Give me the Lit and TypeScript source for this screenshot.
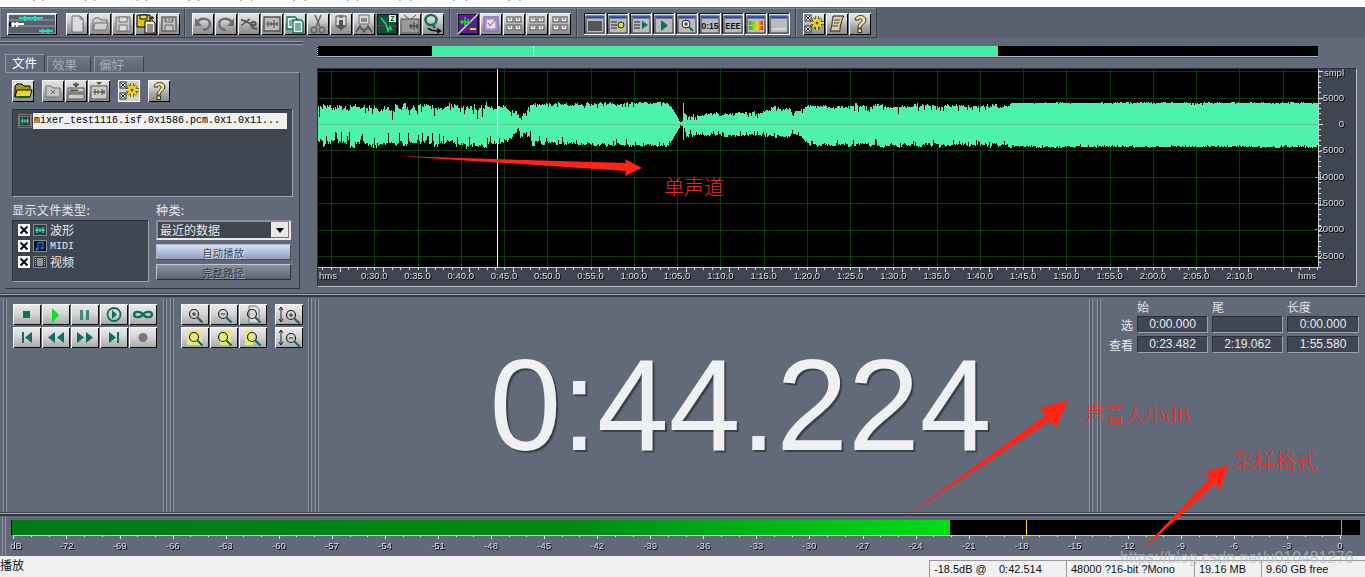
import { LitElement, html, css, svg } from "lit";
import { customElement } from "lit/decorators.js";

const G = "#6c6f74", T = "#0e6f5f";
const ico: Record<string, any> = {
  logo: svg`<rect x="2" y="2" width="46" height="18" fill="#59606c"/><path d="M2 7H48M2 13H48" stroke="#8fa0b8"/><path d="M12 5h24M18 3v5M22 4v3M28 3v5M32 4v3" stroke="#19e0c0" stroke-width="2"/><path d="M3 11h14M6 9v5M10 9v5" stroke="#fff" stroke-width="2"/><rect x="2" y="9.500" width="2" height="4" fill="#000"/><path d="M32 18h14M36 16v4M41 16v4" stroke="#19e0c0" stroke-width="2"/>`,
  new: svg`<path d="M6 3h8l3 3v13H6z" fill="#dcdcdc" stroke="${G}"/><path d="M14 3v3h3" fill="none" stroke="${G}"/>`,
  open: svg`<path d="M4 17V7l2-2h4l2 2h6v3" fill="none" stroke="${G}"/><path d="M4 17l2-7h13l-2 7z" fill="#d0d0d0" stroke="${G}"/>`,
  save: svg`<path d="M4 4h14v14H4z" fill="#c8c8c8" stroke="${G}"/><path d="M7 4h8v5H7zM7 12h8v6H7z" fill="#ddd" stroke="${G}"/>`,
  saveall: svg`<path d="M2 2h13v12H2z" fill="#d9c51e" stroke="#000"/><path d="M5 2h7v4H5z" fill="#f0e050" stroke="#000"/><path d="M10 8h8l2 2v10H10z" fill="#eee" stroke="#000"/><path d="M12 12h6M12 14h6M12 16h6M12 18h6" stroke="#333"/><path d="M17 3v4M15 5h4" stroke="#000"/>`,
  saveg: svg`<path d="M4 4h14v14H4z" fill="#c4c4c4" stroke="#666" stroke-width="1.500"/><path d="M7 4v5h8V4M8 5v3M11 5v3M14 5v3M7 18v-6h8v6" fill="none" stroke="#666"/>`,
  undo: svg`<path d="M5 9c4-5 13-4 13 2 0 4-4 6-7 6" fill="none" stroke="${G}" stroke-width="2.500"/><path d="M3 5v8h7z" fill="${G}"/>`,
  redo: svg`<path d="M17 9c-4-5-13-4-13 2 0 4 4 6 7 6" fill="none" stroke="${G}" stroke-width="2.500"/><path d="M19 5v8h-7z" fill="${G}"/>`,
  mix: svg`<path d="M3 7c5 0 8 4 12 5 3 .8 4-2 1-3-4-1-5 6 3 7" fill="none" stroke="#555" stroke-width="2"/><path d="M3 12c3 0 5-4 9-6" fill="none" stroke="#555" stroke-width="1.500"/>`,
  wbox: svg`<rect x="3" y="4" width="16" height="14" fill="#bbb" stroke="#555" stroke-width="1.500"/><path d="M5 11h12M7 8v6M10 9v4M13 7v8M16 9v4" stroke="#444"/>`,
  copy: svg`<path d="M3 4h8l2 2v10H3z" fill="#e8f4ee" stroke="#0a6b50" stroke-width="1.300"/><path d="M9 7h8l2 2v11H9z" fill="#e8f4ee" stroke="#0a6b50" stroke-width="1.300"/><path d="M5 8h5M5 10h3M5 12h3M11 11h6M11 13h6M11 15h6M11 17h6" stroke="#0a6b50"/>`,
  cut: svg`<path d="M8 2l5 12M14 2l-5 12" stroke="#666" stroke-width="1.500"/><circle cx="7" cy="17" r="2.800" fill="none" stroke="#666" stroke-width="1.500"/><circle cx="15" cy="17" r="2.800" fill="none" stroke="#666" stroke-width="1.500"/>`,
  paste: svg`<path d="M6 3h10v11H6z" fill="#ddd" stroke="#555"/><rect x="9" y="2" width="4" height="3" fill="#777"/><path d="M9 7h4v5h3l-5 6-5-6h3z" fill="#555"/>`,
  pastemix: svg`<path d="M6 2h10v9H6z" fill="#ddd" stroke="#666"/><path d="M8 5h6v4H8z" fill="#888"/><path d="M3 19l4-6 4 6 4-6 4 6" fill="none" stroke="#555" stroke-width="1.500"/><path d="M5 16h12" stroke="#555"/>`,
  graph: svg`<rect x="1" y="1" width="20" height="20" fill="#0b4f3e" stroke="#000"/><path d="M1 13h20" stroke="#d02020"/><path d="M5 5l5 6 2 7 2-4 2 3" fill="none" stroke="#20e060" stroke-width="1.500"/><rect x="13" y="2" width="7" height="7" fill="#d8e8e0"/><path d="M15 3.500h3l-3 4h3" fill="none" stroke="#063"/>`,
  tv: svg`<path d="M5 2l5 4M17 2l-5 4" stroke="#555"/><rect x="2" y="6" width="18" height="14" fill="#999" stroke="#555"/><path d="M10 13h9M12 11v5M15 9v8M18 11v5" stroke="#333"/>`,
  q: svg`<ellipse cx="9" cy="7" rx="5.500" ry="5" fill="none" stroke="${T}" stroke-width="2.500"/><path d="M10 11l3 4" stroke="${T}" stroke-width="2.500"/><path d="M6 15c3 3 7 3 10 3" fill="none" stroke="#111" stroke-width="1.500"/><path d="M15 15l5 3-5 3z" fill="#111"/>`,
  diag: svg`<rect x="1" y="1" width="20" height="20" fill="#5b1e90" stroke="#000"/><path d="M1 21L21 1V1" stroke="#ddd" stroke-width="1.500"/><path d="M3 9h11M8 4v9M11 6v6M5 7v4" stroke="#20e020" stroke-width="1.500"/><rect x="13" y="15" width="6" height="2" fill="#f0d020"/>`,
  check: svg`<rect x="4" y="4" width="14" height="14" fill="#c8bcd8" stroke="#8a6cb0" stroke-width="1.500"/><rect x="6" y="6" width="10" height="10" fill="#e4e0ec" stroke="#8a6cb0"/><path d="M8 10l2 3 6-7" fill="none" stroke="#7a5ca0"/>`,
  hash: svg`<path d="M4 4h6v5H4zM12 4h6v5h-6zM4 12h6v5H4zM12 12h6v5h-6z" fill="#eee" stroke="#777" stroke-width="1.500"/><path d="M6 6h2M14 6h2M6 14h2M14 14h2" stroke="#555"/>`,
  gear: svg`<rect x="2" y="2" width="6" height="6" fill="#fff" stroke="#222"/><path d="M3 3l4 4M7 3l-4 4" stroke="#222"/><rect x="2" y="13" width="6" height="6" fill="#fff" stroke="#222"/><path d="M3 14l4 4M7 14l-4 4" stroke="#222"/><path d="M14 3v14M8 10h13M9.500 5.500l9 9M18.500 5.500l-9 9" stroke="#000" stroke-width="3"/><path d="M14 3v14M8 10h13M9.500 5.500l9 9M18.500 5.500l-9 9" stroke="#ecd820" stroke-width="2"/><circle cx="14" cy="10" r="4" fill="#ecd820"/><circle cx="14" cy="10" r="1.500" fill="#555"/>`,
  scroll: svg`<path d="M7 3h11c-2 2-2 5-3 8s-1 5-1 7H4c1-2 2-4 2-7s1-6 1-8z" fill="#e2cb9a" stroke="#222"/><path d="M8 7h6M8 10h5M7 13h5" stroke="#444"/>`,
  help: svg`<path d="M6 7c0-6 11-6 11 0 0 4-5 4-5 8H9c0-5 4-5 4-8 0-2-3-2-3 0z" fill="#f0e890" stroke="#333"/><rect x="9" y="16" width="3.500" height="3.500" fill="#f0e890" stroke="#333"/>`,
  folder: svg`<path d="M3 17V6l2-2h5l2 2h6v3" fill="#a89610" stroke="#000"/><path d="M3 17l2-7h15l-2 7z" fill="#e8d820" stroke="#000"/><path d="M5 17h13" stroke="#063" stroke-width="2"/>`,
  xfolder: svg`<path d="M4 17V6h5l2 2h7v9z" fill="#c4c4c4" stroke="${G}"/><path d="M9 10l4 4M13 10l-4 4" stroke="${G}"/>`,
  closeall: svg`<path d="M11 2v3M8 4h6l-3 3z" fill="#555" stroke="#555"/><rect x="3" y="8" width="16" height="4" fill="#ccc" stroke="#555"/><rect x="3" y="14" width="16" height="5" fill="#ccc" stroke="#555"/><rect x="5" y="9.500" width="8" height="1.500" fill="#555"/>`,
  closewave: svg`<path d="M8 2h6l-3 3z" fill="#555"/><rect x="3" y="6" width="16" height="13" fill="#ccc" stroke="#555"/><path d="M5 12h12M7 9v6M10 10v4M14 9v6M16 10v4" stroke="#444"/>`,
};
const winBody = (inner: any) => svg`<rect x="2" y="3" width="18" height="17" fill="#bbb" stroke="#333"/><rect x="3" y="3.500" width="16" height="2" fill="#2040c0"/>${inner}`;
const wins = [
  winBody(svg`<rect x="4" y="8" width="14" height="10" fill="#555"/>`),
  winBody(svg`<path d="M4 9h6M4 12h6M4 15h6" stroke="#222"/><circle cx="14" cy="12" r="3" fill="#dd2" stroke="#222"/>`),
  winBody(svg`<path d="M4 9h6M4 12h6M4 15h6" stroke="#222"/><path d="M12 8l6 4-6 4z" fill="${T}"/>`),
  winBody(svg`<path d="M8 7l7 5.500-7 5.500z" fill="${T}"/>`),
  winBody(svg`<circle cx="10" cy="11" r="4" fill="#eee" stroke="#222"/><path d="M8 11h4M10 9v4" stroke="#222"/><path d="M13 14l4 4" stroke="${T}" stroke-width="2"/>`),
  winBody(svg`<text x="11" y="16" text-anchor="middle" font-size="8.500" font-weight="700" font-family="Liberation Sans" fill="#111">0:15</text>`),
  winBody(svg`<text x="11" y="16" text-anchor="middle" font-size="8.500" font-weight="700" font-family="Liberation Mono" fill="#111">EEE</text>`),
  winBody(svg`<rect x="4" y="8" width="14" height="4" fill="url(#mt)"/><rect x="4" y="13" width="14" height="4" fill="url(#mt)"/>`),
  winBody(svg`<path d="M4 16h14" stroke="#eee"/>`),
];
const mag = (extra: any = "") => svg`<g transform="translate(3 1)"><circle cx="10" cy="9" r="4.500" fill="none" stroke="#222" stroke-width="1.200"/>${extra}<path d="M13.500 12.500l5 5" stroke="${T}" stroke-width="2.200"/></g>`;
const plus = svg`<path d="M8 9h4M10 7v4" stroke="#222"/>`;
const minus = svg`<path d="M8 9h4" stroke="#222"/>`;
const vArrow = svg`<path d="M6 3v15M4 6l2-3 2 3M4 15l2 3 2-3" fill="none" stroke="#222"/>`;
const tr: Record<string, any> = {
  stop: svg`<rect x="10" y="7" width="7" height="7" fill="${T}"/>`,
  play: svg`<path d="M10 4l7 7-7 8z" fill="#10e020"/>`,
  pause: svg`<path d="M9 6h3v10H9zM15 6h3v10h-3z" fill="#3f8a7c"/>`,
  loopp: svg`<circle cx="14" cy="10.500" r="6.500" fill="none" stroke="${T}" stroke-width="1.800"/><path d="M12 6l5 4.500-5 4.500z" fill="${T}"/>`,
  loop: svg`<path d="M14 10.500c-3-4-9-3-9 0s6 4 9 0 9-3 9 0-6 4-9 0z" fill="none" stroke="${T}" stroke-width="2.400"/>`,
  first: svg`<path d="M9 5h2v11H9zM19 5v11l-7-5.500z" fill="${T}"/>`,
  rew: svg`<path d="M13 5v11l-7-5.500zM22 5v11l-7-5.500z" fill="${T}"/>`,
  ffw: svg`<path d="M6 5v11l7-5.500zM15 5v11l7-5.500z" fill="${T}"/>`,
  last: svg`<path d="M9 5v11l7-5.500zM17 5h2v11h-2z" fill="${T}"/>`,
  rec: svg`<circle cx="14" cy="10.500" r="4.500" fill="#777"/>`,
  zin: mag(plus),
  zout: mag(minus),
  zfull: svg`<path d="M10 2h7l3 3v14H10z" fill="#ddd" stroke="#777"/>${mag()}`,
  zsel: svg`<rect x="6" y="3" width="15" height="15" fill="#e8e880"/>${mag()}`,
  zl: svg`<rect x="10" y="3" width="11" height="15" fill="#e8e880"/>${mag()}`,
  zr: svg`<rect x="6" y="3" width="8" height="15" fill="#e8e880"/>${mag()}`,
  vin: svg`${vArrow}<g transform="translate(3 1)">${mag(plus)}</g>`,
  vout: svg`${vArrow}<g transform="translate(3 1)">${mag(minus)}</g>`,
};

function rng(seed: number) {
  let s = seed;
  return () => { s = (s * 1664525 + 1013904223) >>> 0; return s / 4294967296; };
}
function interp(t: number[][], x: number) {
  for (let i = 1; i < t.length; i++) {
    if (x <= t[i][0]) {
      const [a, b] = [t[i - 1], t[i]];
      const k = (x - a[0]) / Math.max(1, b[0] - a[0]);
      return a[1] + (b[1] - a[1]) * k;
    }
  }
  return t[t.length - 1][1];
}
const upA = [[318,21],[500,23],[512,18],[526,13],[530,22],[668,23],[680,2],[683,3],[684,12],[720,12],[760,14],[775,20],[800,15],[810,21],[1008,21],[1012,22],[1318,22]];
const upD = [[318,13],[500,13],[530,8],[532,6],[668,6],[672,1],[684,1],[686,7],[808,7],[810,8],[1008,8],[1012,2],[1318,2]];
const loA = [[318,25],[500,25],[512,15],[530,14],[532,23],[668,24],[672,16],[680,2],[684,4],[686,14],[800,14],[810,24],[1318,24]];
const loD = [[318,14],[500,12],[530,7],[532,9],[668,7],[672,1],[684,1],[686,6],[808,6],[810,7],[1008,7],[1012,3],[1318,3]];
function wavePath() {
  const r = rng(1116);
  const bars: string[] = [];
  let blockU = 0, blockD = 0, left = 0;
  for (let x = 318; x < 1318; x++) {
    if (left-- <= 0) { left = 1 + Math.floor(r() * 5); blockU = r(); blockD = r(); }
    const spikeU = r() < 0.1 ? 0.6 : 0;
    const spikeD = r() < 0.1 ? 0.6 : 0;
    let u = interp(upA, x) - interp(upD, x) * (0.45 * blockU + 0.35 * r() + spikeU);
    let d = interp(loA, x) - interp(loD, x) * (0.45 * blockD + 0.35 * r() + spikeD);
    if (x === 683) { u = 21; d = 16; }
    bars.push(`M${x - 318}.5 ${(55 - u).toFixed(0)}V${(55 + d).toFixed(0)}`);
  }
  return bars.join("");
}
const WAVE = wavePath();
const range = (n: number) => Array.from({ length: n }, (_, i) => i);
const fmtT = (s: number) => `${Math.floor(s / 60)}:${String(s % 60).padStart(2, "0")}.0`;
const STEP = 43.26;
const vX = range(23).map((i) => 13 + i * STEP);
const hY = [2, 29, 55, 81, 108, 134, 161, 187];
const yLabels: [string, number][] = [["smpl", 4], ["5000", 29], ["0", 55], ["-5000", 81], ["-10000", 108], ["-15000", 134], ["-20000", 160], ["-25000", 187]];

@customElement("app-root")
export class AppRoot extends LitElement {
  static styles = css`
    :host { display: block; width: 1365px; height: 577px; overflow: hidden; position: relative; background: #626a79; font-family: "Liberation Sans", "Noto Sans CJK SC", sans-serif; color: #e6e9ee; }
    * { box-sizing: border-box; }
    svg { display: block; }
    .page { display: grid; grid-template-rows: 7px 31px 255px 5px 214px 5px 39px 21px; height: 577px; }
    .menu { background: #fff; overflow: hidden; color: #555; font: 12px/13px "Noto Sans CJK SC", sans-serif; white-space: nowrap; padding-left: 7px; word-spacing: 10px; }
    .menu span { display: block; margin-top: -13px; }
    .toolbar { display: flex; padding-top: 1px; background: #59606e; }
    .tpanel { display: flex; align-items: flex-start; padding: 4px 0 0 6px; gap: 1px; height: 30px; background: #626a79; border: 1px solid; border-color: #7d8493 #3b404b #3b404b #7d8493; }
    .b { width: 22px; height: 22px; flex: none; background: linear-gradient(#e6e6e6, #d0d0d0 35%, #a4a4a4 65%, #8a8a8a); box-shadow: inset 1px 1px #f4f4f4, inset -1px -1px #000; }
    .b.sel { background: #d0d0d0; box-shadow: inset 0 0 0 1px #fff; }
    .b.win { box-shadow: inset -1px -1px #fff, inset 1px 1px #111; }
    .b.wide { width: 50px; }
    .main { display: grid; grid-template-columns: 303px 7px 1fr; }
    .left { display: flex; flex-direction: column; }
    .hgrip { height: 8px; flex: none; padding-top: 3px; }
    .hgrip i { display: block; height: 4px; border-top: 1px solid #8e95a3; border-bottom: 1px solid #8e95a3; background: #454b57; }
    .tabs { display: flex; align-items: flex-end; height: 26px; padding: 8px 0 0 5px; gap: 2px; flex: none; font: 12.500px "Noto Sans CJK SC", sans-serif; }
    .tab { height: 16px; width: 44px; padding-left: 4px; line-height: 16px; color: #a4abb8; background: linear-gradient(#6f7788, #5d6473); border: 1px solid; border-color: #8e95a3 #3b404b transparent #8e95a3; border-bottom: 0; }
    .tab.on { width: 40px; height: 18px; color: #fff; background: #626a79; padding-left: 6px; margin-right: 0; }
    .tab.w3 { width: 50px; margin-left: 1px; }
    .tbody { margin: 0 3px 4px 5px; height: 217px; border: 1px solid; border-color: #8e95a3 #30353f #30353f #626a79; padding: 7px 7px 0 6px; display: flex; flex-direction: column; }
    .tbtns { display: flex; height: 22px; flex: none; }
    .tbtns .b { margin-right: 1px; }
    .ml7 { margin-left: 7px; }
    .filelist { margin-top: 7px; height: 88px; flex: none; width: 281px; background: #3f4651; border: 1px solid; border-color: #2b2f38 #9ba2af #9ba2af #2b2f38; padding: 3px 5px; display: flex; align-items: flex-start; }
    .fname { background: #f0f0f0; color: #000; width: 255px; height: 16px; font: 10px/16px "Liberation Mono", monospace; padding-left: 1px; white-space: nowrap; margin-left: 1px; }
    .fic { width: 14px; height: 14px; margin-top: 1px; background: #333944; border: 1px solid #777; flex: none; }
    .lower { display: grid; grid-template-columns: 137px 135px; column-gap: 7px; margin-top: 3px; font: 12px/20px "Noto Sans CJK SC", sans-serif; }
    .lbl { height: 20px; color: #e6e9ee; letter-spacing: .4px; }
    .types { height: 62px; background: #3f4651; border: 1px solid; border-color: #2b2f38 #9ba2af #9ba2af #2b2f38; padding: 1px 0 0 5px; }
    .row { display: flex; align-items: center; height: 16px; gap: 3px; font-size: 12px; }
    .cb { width: 12px; height: 12px; background: #fff; flex: none; color: #000; }
    .midi { font: 10px "Liberation Mono", monospace; }
    .sel-wrap { display: flex; align-items: center; height: 20px; background: #3f4651; border: 2px solid; border-color: #8d8f94 #e8e8e8 #e8e8e8 #8d8f94; padding-left: 2px; font-size: 12px; justify-content: space-between; }
    .arrow { width: 18px; height: 16px; background: #e8e8e8; display: flex; align-items: center; justify-content: center; box-shadow: inset -1px -1px #777; }
    .arrow i { border: 4px solid transparent; border-top: 5px solid #000; border-bottom: 0; }
    .pb { height: 16px; margin-top: 4px; font: 10px/15px "Noto Sans CJK SC", sans-serif; text-align: center; color: #3e4450; text-shadow: 1px 1px #e8ecf4; letter-spacing: .5px; border: 1px solid; }
    .pb.a { background: linear-gradient(#d6e2fa, #8f9db8); border-color: #b0b8c8 #454b57 #454b57 #b0b8c8; }
    .pb.c { background: linear-gradient(#8a91a0, #5b6270); border-color: #c0c6d2 #2b2f38 #2b2f38 #c0c6d2; color: #30353f; text-shadow: 1px 1px #a8aebb; margin-top: 4px; }
    .vsep { display: flex; gap: 3px; padding: 2px 0 0 0; }
    .vsep i { display: block; width: 1px; background: #8e95a3; }
    .vsep i:first-child { box-shadow: 1px 0 #454b57; }
    .vsep b { display: block; width: 1px; background: #3b404b; }
    .right { padding: 8px 0 0 7px; }
    .over { width: 1001px; height: 10px; background: #000; position: relative; box-shadow: 0 1px #b5bac4, 0 2px #454b57; display: flex; }
    .over .dots { width: 1px; height: 10px; background: repeating-linear-gradient(#f0e040 0 1px, #000 1px 2px); flex: none; }
    .over .gap { width: 114px; flex: none; }
    .over .green { width: 566px; background: #46eba6; flex: none; display: flex; padding-left: 101px; }
    .over .green i { width: 1px; background: #fff; display: block; }
    .wavebox { margin-top: 12px; width: 1040px; height: 219px; background: #3f4651; border: 1px solid; border-color: #2b2f38 #b5bac4 #b5bac4 #2b2f38; }
    .wavebox text { font: 9.500px "Liberation Sans", sans-serif; fill: #d8dee8; filter: drop-shadow(1px 1px 0 #000); }
    .hsep { border-top: 1px solid #3b404b; }
    .hsep i { display: block; height: 1px; background: #a4aab6; box-shadow: 0 1px #30353f, 0 2px #30353f; }
    .deck { display: flex; }
    .vg { width: 4px; flex: none; border-left: 1px solid #8e95a3; border-right: 1px solid #8e95a3; background: #555c69; }
    .sp3 { width: 3px; flex: none; }
    .sp4 { width: 4px; flex: none; }
    .ml3 { margin-left: 3px; }
    .sec1 { width: 156px; padding: 6px 0 0 6px; flex: none; }
    .sec2 { width: 134px; padding: 6px 0 0 7px; flex: none; display: flex; gap: 8px; align-items: flex-start; }
    .grid5 { display: grid; grid-template-columns: repeat(5, 28px); grid-auto-rows: 21px; gap: 2px 1px; }
    .grid3 { display: grid; grid-template-columns: repeat(3, 28px); grid-auto-rows: 21px; gap: 2px 1px; }
    .grid1 { display: grid; grid-template-columns: 28px; grid-auto-rows: 21px; gap: 2px; }
    .t { width: 28px; height: 21px; background: linear-gradient(#ececec, #d6d6d6 45%, #a6a6a6); box-shadow: inset 1px 1px #f8f8f8, inset -1px -1px #111; }
    .time { width: 770px; flex: none; display: flex; align-items: center; justify-content: center; padding-left: 73px; font: 129px/1 "Liberation Sans", sans-serif; color: #eef0f2; text-shadow: 2px 2px 1px #3a404b; }
    .sec4 { flex: 1; display: grid; grid-template-columns: 32px 71px 71px 72px; grid-template-rows: 15px 17px 17px; gap: 3px 4px; font: 13px "Noto Sans CJK SC", sans-serif; align-content: start; }
    .sec4 .h { line-height: 17px; color: #dfe3e9; font-size: 12px; }
    .sec4 .k { text-align: right; line-height: 17px; color: #e6e9ee; font-size: 12px; white-space: nowrap; }
    .v { background: #3f4651; border: 1px solid; border-color: #2b2f38 #9ba2af #9ba2af #2b2f38; text-align: center; font: 12px/15px "Liberation Sans", sans-serif; color: #e4ecf8; }
    .meter text { font: 9.500px "Liberation Sans", sans-serif; fill: #d8dee8; filter: drop-shadow(1px 1px 0 #000); }
    .status { background: #f0f0f0; color: #111; display: grid; grid-template-columns: 929px 137px 128px 67px 104px; font: 11px/17px "Liberation Sans", "Noto Sans CJK SC", sans-serif; }
    .status div { margin-top: 4px; padding-left: 4px; border-top: 1px solid #999; border-left: 1px solid #999; white-space: pre; }
    .status div:first-child { border: 0; margin-top: 0; padding: 2px 0 0 0; font-size: 12px; }
    .over-art { position: absolute; left: 0; top: 0; pointer-events: none; }
    .note { position: absolute; color: #f32a1c; font: 300 20px/1 "Noto Sans CJK SC", sans-serif; white-space: nowrap; }
    .n1 { left: 664px; top: 177px; }
    .n2 { left: 1085px; top: 404px; }
    .n3 { left: 1233px; top: 449px; font-size: 21px; }
    .wm { position: absolute; left: 1120px; top: 550px; font: 15.800px/1 "Liberation Sans", sans-serif; color: rgba(182,190,200,.7); white-space: nowrap; }
  `;

  private btn(k: any, cls = "") {
    const w = cls.includes("wide") ? 50 : 22;
    return html`<div class="b ${cls}"><svg width=${w} height="22" viewBox="0 0 ${w} 22">${k}</svg></div>`;
  }
  private tb(k: any) {
    return html`<div class="t"><svg width="28" height="21" viewBox="0 0 28 21">${k}</svg></div>`;
  }
  private smallWave() {
    return svg`<rect x=".5" y=".5" width="13" height="11" fill="#333944" stroke="#888"/><path d="M2 6h10M4 3v6M7 4v4M10 3v6" stroke="#2fe39a" stroke-width="1.300"/>`;
  }
  private cb() {
    return html`<div class="cb"><svg width="12" height="12" viewBox="0 0 12 12"><path d="M2.500 2.500l7 7M9.500 2.500l-7 7" stroke="#000" stroke-width="2"/></svg></div>`;
  }

  render() {
    return html`
      <svg width="0" height="0" class="over-art"><defs>
        <linearGradient id="mt"><stop offset="0" stop-color="#10c020"/><stop offset=".6" stop-color="#e8e020"/><stop offset="1" stop-color="#e02020"/></linearGradient>
        <linearGradient id="mg"><stop offset="0" stop-color="#007a16"/><stop offset=".6" stop-color="#008a16"/><stop offset="1" stop-color="#00de16"/></linearGradient>
      </defs></svg>
      <div class="page">
        <div class="menu"><span>文件(F) 编辑(E) 查看(V) 效果(A) 生成(G) 分析(N) 偏好(P) 选项(O) 窗口(W) 帮助(H)</span></div>
        <div class="toolbar">
          <div class="tpanel" style="width:185px">${this.btn(ico.logo, "wide")}<span style="width:7px"></span>${[ico.new, ico.open, ico.save, ico.saveall, ico.saveg].map((i) => this.btn(i))}</div>
          <div class="tpanel" style="width:265px">${[ico.undo, ico.redo, ico.mix, ico.wbox, ico.copy, ico.cut, ico.paste, ico.pastemix, ico.graph, ico.tv, ico.q].map((i) => this.btn(i))}</div>
          <div class="tpanel" style="width:127px">${[ico.diag, ico.check, ico.hash, ico.hash, ico.hash].map((i) => this.btn(i))}</div>
          <div class="tpanel" style="width:219px">${wins.map((w) => this.btn(w, "win"))}</div>
          <div class="tpanel" style="width:81px">${[ico.gear, ico.scroll, ico.help].map((i) => this.btn(i))}</div>
        </div>
        <div class="main">
          <div class="left">
            <div class="hgrip"><i></i></div>
            <div class="tabs"><div class="tab on">文件</div><div class="tab">效果</div><div class="tab w3">偏好</div></div>
            <div class="tbody">
              <div class="tbtns">
                ${this.btn(ico.folder)}
                <span class="ml7"></span>${[ico.xfolder, ico.closeall, ico.closewave].map((i) => this.btn(i))}
                <span class="ml7"></span>${this.btn(ico.gear, "sel")}
                <span class="ml7"></span>${this.btn(ico.help)}
              </div>
              <div class="filelist">
                <svg class="fic" width="14" height="12" viewBox="0 0 14 12">${this.smallWave()}</svg>
                <div class="fname">mixer_test1116.isf.0x1586.pcm.0x1.0x11...</div>
              </div>
              <div class="lower">
                <div class="lbl">显示文件类型:</div>
                <div class="lbl">种类:</div>
                <div class="types">
                  <div class="row">${this.cb()}<svg width="14" height="12" viewBox="0 0 14 12">${this.smallWave()}</svg>波形</div>
                  <div class="row">${this.cb()}<svg width="14" height="12" viewBox="0 0 14 12"><rect x=".5" y=".5" width="13" height="11" fill="#10141c" stroke="#888"/><path d="M5 9V3l5-1v6" fill="none" stroke="#1a6fe0" stroke-width="1.300"/><circle cx="4" cy="9" r="1.500" fill="#1a6fe0"/><circle cx="9" cy="8" r="1.500" fill="#1a6fe0"/></svg><span class="midi">MIDI</span></div>
                  <div class="row">${this.cb()}<svg width="14" height="12" viewBox="0 0 14 12"><rect x=".5" y=".5" width="13" height="11" fill="#333944" stroke="#888"/><rect x="4" y="2" width="6" height="8" fill="#8a8f98"/><path d="M2.500 2v8M11.500 2v8" stroke="#bbb" stroke-dasharray="1 1"/></svg>视频</div>
                </div>
                <div>
                  <div class="sel-wrap">最近的数据<div class="arrow"><i></i></div></div>
                  <div class="pb a">自动播放</div>
                  <div class="pb c">完整路径</div>
                </div>
              </div>
            </div>
          </div>
          <div class="vsep"><i></i><b></b><i></i><b></b><i></i></div>
          <div class="right">
            <div class="over"><div class="dots"></div><div class="gap"></div><div class="green"><i></i></div></div>
            <div class="wavebox">
              <svg width="1038" height="217" viewBox="0 0 1038 217">
                <rect width="1000" height="198" fill="#000"/>
                ${vX.map((x) => svg`<path d="M${x.toFixed(0)}.5 0V198" stroke="#0b3a0b"/>`)}
                ${hY.map((y) => svg`<path d="M0 ${y}.5H1000" stroke="#0b3a0b"/>`)}
                <path d=${WAVE} stroke="#4df3aa" fill="none"/>
                <path d="M0 55.500H1000" stroke="#66c796"/>
                <path d="M179.500 0V198" stroke="#fff"/>
                <path d="M0 198.500H1000.500V0" fill="none" stroke="#c4c8d0"/>
                ${range(116).map((i) => svg`<path d=${`M${(4.35 + i * 8.652).toFixed(0)}.5 199v${i % 5 === 2 ? 4 : 2}`} stroke="#e0e2e6"/>`)}
                ${range(38).map((i) => svg`<path d=${`M1001 ${(2 + i * 5.3).toFixed(0)}.5h${i % 5 === 0 ? 4 : 2}`} stroke="#e0e2e6"/>`)}
                <text x="1" y="210">hms</text>
                ${range(21).map((i) => svg`<text x=${vX[i + 1]} y="210" text-anchor="middle">${fmtT(30 + i * 5)}</text>`)}
                <text x="980" y="210">hms</text>
                ${yLabels.map(([t, y]) => svg`<text x="1026" y=${y + 3} text-anchor="end">${t}</text>`)}
              </svg>
            </div>
          </div>
        </div>
        <div class="hsep"><i></i></div>
        <div class="deck">
          <div class="vg ml3"></div>
          <div class="sec1"><div class="grid5">${[tr.stop, tr.play, tr.pause, tr.loopp, tr.loop, tr.first, tr.rew, tr.ffw, tr.last, tr.rec].map((i) => this.tb(i))}</div></div>
          <div class="vg"></div><div class="sp3"></div><div class="vg"></div>
          <div class="sec2">
            <div class="grid3">${[tr.zin, tr.zout, tr.zfull, tr.zsel, tr.zl, tr.zr].map((i) => this.tb(i))}</div>
            <div class="grid1">${[tr.vin, tr.vout].map((i) => this.tb(i))}</div>
          </div>
          <div class="vg"></div><div class="sp3"></div><div class="vg"></div>
          <div class="time">0:44.224</div>
          <div class="vg"></div><div class="sp4"></div><div class="vg"></div>
          <div class="sec4">
            <span></span><div class="h">始</div><div class="h">尾</div><div class="h">长度</div>
            <div class="k">选</div><div class="v">0:00.000</div><div class="v"></div><div class="v">0:00.000</div>
            <div class="k">查看</div><div class="v">0:23.482</div><div class="v">2:19.062</div><div class="v">1:55.580</div>
          </div>
        </div>
        <div class="hsep"><i></i></div>
        <div class="meter">
          <svg width="1365" height="39" viewBox="0 0 1365 39">
            <path d="M2.500 0V38M5.500 0V38" stroke="#8e95a3"/>
            <rect x="11" y="3" width="1349" height="15" fill="#000"/>
            <rect x="12" y="3" width="938" height="15" fill="url(#mg)"/>
            <rect x="1026" y="3" width="1" height="15" fill="#f0e020"/>
            <rect x="1341" y="3" width="1" height="15" fill="#9aa0aa"/>
            <path d="M13 18.500H1342" stroke="#c4c8d0"/>
            ${range(76).map((i) => svg`<path d=${`M${(13.4 + i * 17.69).toFixed(0)}.5 19v${i % 3 === 0 ? 3 : 1}`} stroke="#e0e2e6"/>`)}
            <text x="16" y="32" text-anchor="middle">dB</text>
            ${range(24).map((i) => svg`<text x=${66.6 + i * 53.06} y="32" text-anchor="middle">${-72 + i * 3}</text>`)}
            <text x="1340" y="32" text-anchor="middle">0</text>
          </svg>
        </div>
        <div class="status">
          <div>播放</div>
          <div>-18.5dB @    0:42.514</div>
          <div>48000 ?16-bit ?Mono</div>
          <div>19.16 MB</div>
          <div>9.60 GB free</div>
        </div>
      </div>
      <svg class="over-art" width="1365" height="577" viewBox="0 0 1365 577">
        <path d="M397 156L626 163L625 159L642 168L625 176L626 171Z" fill="#ff2318"/>
        <path d="M903 518L1046 415L1040 408L1068 400L1056 428L1050 421Z" fill="#ff2318"/>
        <path d="M1137 555L1210 478L1205 472L1228 465L1220 490L1215 484Z" fill="#ff2318"/>
      </svg>
      <div class="note n1">单声道</div>
      <div class="note n2">声音大小dB</div>
      <div class="note n3">采样格式</div>
      <div class="wm">https://blog.csdn.net/u010481276</div>
    `;
  }
}
